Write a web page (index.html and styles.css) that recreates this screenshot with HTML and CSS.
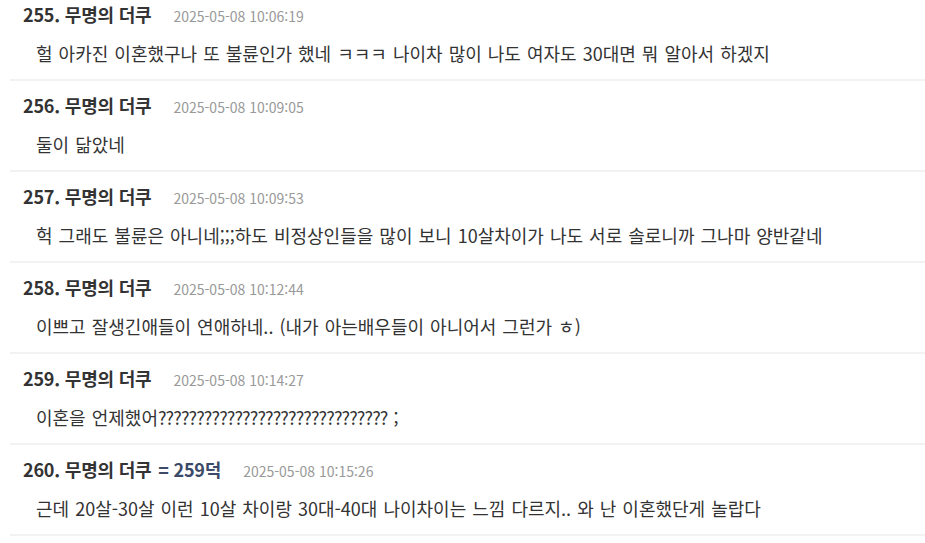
FILE: index.html
```html
<!DOCTYPE html>
<html lang="ko">
<head>
<meta charset="utf-8">
<link rel="stylesheet" href="styles.css">
</head>
<body>
<ul class="comments">
  <li class="comment">
    <div class="head"><span class="name">255. 무명의 더쿠</span><span class="date">2025-05-08 10:06:19</span></div>
    <p class="body">헐 아카진 이혼했구나 또 불륜인가 했네 ㅋㅋㅋ 나이차 많이 나도 여자도 30대면 뭐 알아서 하겠지</p>
  </li>
  <li class="comment">
    <div class="head"><span class="name">256. 무명의 더쿠</span><span class="date">2025-05-08 10:09:05</span></div>
    <p class="body">둘이 닮았네</p>
  </li>
  <li class="comment">
    <div class="head"><span class="name">257. 무명의 더쿠</span><span class="date">2025-05-08 10:09:53</span></div>
    <p class="body">헉 그래도 불륜은 아니네;;;하도 비정상인들을 많이 보니 10살차이가 나도 서로 솔로니까 그나마 양반같네</p>
  </li>
  <li class="comment">
    <div class="head"><span class="name">258. 무명의 더쿠</span><span class="date">2025-05-08 10:12:44</span></div>
    <p class="body">이쁘고 잘생긴애들이 연애하네.. (내가 아는배우들이 아니어서 그런가 ㅎ)</p>
  </li>
  <li class="comment">
    <div class="head"><span class="name">259. 무명의 더쿠</span><span class="date">2025-05-08 10:14:27</span></div>
    <p class="body">이혼을 언제했어<span class="q">??????????????????????????????</span> ;</p>
  </li>
  <li class="comment">
    <div class="head"><span class="name">260. 무명의 더쿠 <span class="reply">= 259덕</span></span><span class="date">2025-05-08 10:15:26</span></div>
    <p class="body">근데 20살-30살 이런 10살 차이랑 30대-40대 나이차이는 느낌 다르지.. 와 난 이혼했단게 놀랍다</p>
  </li>
</ul>
</body>
</html>
```

FILE: styles.css
```css
html, body {
  margin: 0;
  padding: 0;
  background: #ffffff;
}
body {
  font-family: "Noto Sans CJK KR", "Noto Sans", sans-serif;
  color: #333333;
  overflow: hidden;
}
.comments {
  list-style: none;
  margin: -10px 0 0 10px;
  padding: 0;
}
.comment {
  border-bottom: 2px solid #f2f2f2;
  padding: 12px 0 0 13px;
  height: 91px;
  box-sizing: border-box;
}
.head {
  display: flex;
  align-items: baseline;
  gap: 22px;
  height: 24px;
  line-height: 24px;
}
.name {
  font-size: 18px;
  font-weight: 700;
  color: #333333;
  letter-spacing: -0.2px;
}
.reply {
  color: #3b4a68;
  margin-left: 2px;
}
.date {
  font-size: 14px;
  color: #999999;
}
.body {
  margin: 14px 0 0 13px;
  font-size: 18px;
  line-height: 26px;
  word-spacing: 1px;
  color: #333333;
}
.q {
  letter-spacing: -0.9px;
}
```
